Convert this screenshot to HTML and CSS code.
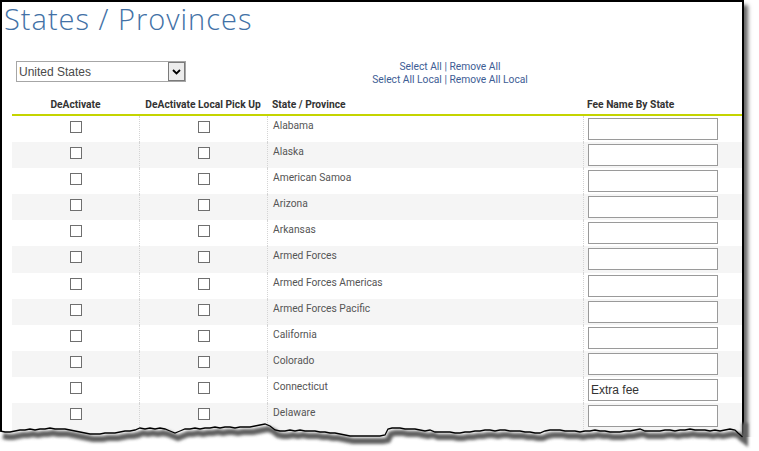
FILE: index.html
```html
<!DOCTYPE html>
<html>
<head>
<meta charset="utf-8">
<link rel="stylesheet" href="styles.css">
</head>
<body>
<div class="page">
  <div class="shot">
    <h1 class="title">States / Provinces</h1>
    <div class="controls">
      <div class="select-box">
        <select class="country"><option>United States</option></select>
        <span class="arrow"><svg width="9" height="6" viewBox="0 0 9 6"><path d="M1 1 L4.5 4.5 L8 1" fill="none" stroke="#000" stroke-width="1.8"/></svg></span>
      </div>
      <div class="links">
        <div><a href="#">Select All</a> | <a href="#">Remove All</a></div>
        <div><a href="#">Select All Local</a> | <a href="#">Remove All Local</a></div>
      </div>
    </div>
    <div class="table">
      <div class="row head">
        <div class="c c1">DeActivate</div>
        <div class="c c2">DeActivate Local Pick Up</div>
        <div class="c c3">State / Province</div>
        <div class="c c4">Fee Name By State</div>
      </div>
      <div class="row"><div class="c c1"><input type="checkbox" class="cb"></div><div class="c c2"><input type="checkbox" class="cb"></div><div class="c c3">Alabama</div><div class="c c4"><input class="fee" type="text"></div></div>
      <div class="row"><div class="c c1"><input type="checkbox" class="cb"></div><div class="c c2"><input type="checkbox" class="cb"></div><div class="c c3">Alaska</div><div class="c c4"><input class="fee" type="text"></div></div>
      <div class="row"><div class="c c1"><input type="checkbox" class="cb"></div><div class="c c2"><input type="checkbox" class="cb"></div><div class="c c3">American Samoa</div><div class="c c4"><input class="fee" type="text"></div></div>
      <div class="row"><div class="c c1"><input type="checkbox" class="cb"></div><div class="c c2"><input type="checkbox" class="cb"></div><div class="c c3">Arizona</div><div class="c c4"><input class="fee" type="text"></div></div>
      <div class="row"><div class="c c1"><input type="checkbox" class="cb"></div><div class="c c2"><input type="checkbox" class="cb"></div><div class="c c3">Arkansas</div><div class="c c4"><input class="fee" type="text"></div></div>
      <div class="row"><div class="c c1"><input type="checkbox" class="cb"></div><div class="c c2"><input type="checkbox" class="cb"></div><div class="c c3">Armed Forces</div><div class="c c4"><input class="fee" type="text"></div></div>
      <div class="row"><div class="c c1"><input type="checkbox" class="cb"></div><div class="c c2"><input type="checkbox" class="cb"></div><div class="c c3">Armed Forces Americas</div><div class="c c4"><input class="fee" type="text"></div></div>
      <div class="row"><div class="c c1"><input type="checkbox" class="cb"></div><div class="c c2"><input type="checkbox" class="cb"></div><div class="c c3">Armed Forces Pacific</div><div class="c c4"><input class="fee" type="text"></div></div>
      <div class="row"><div class="c c1"><input type="checkbox" class="cb"></div><div class="c c2"><input type="checkbox" class="cb"></div><div class="c c3">California</div><div class="c c4"><input class="fee" type="text"></div></div>
      <div class="row"><div class="c c1"><input type="checkbox" class="cb"></div><div class="c c2"><input type="checkbox" class="cb"></div><div class="c c3">Colorado</div><div class="c c4"><input class="fee" type="text"></div></div>
      <div class="row"><div class="c c1"><input type="checkbox" class="cb"></div><div class="c c2"><input type="checkbox" class="cb"></div><div class="c c3">Connecticut</div><div class="c c4"><input class="fee" type="text" value="Extra fee"></div></div>
      <div class="row last"><div class="c c1"><input type="checkbox" class="cb"></div><div class="c c2"><input type="checkbox" class="cb"></div><div class="c c3">Delaware</div><div class="c c4"><input class="fee" type="text"></div></div>
    </div>
  </div>
  <svg class="tear" width="759" height="36" viewBox="0 415 759 36">
    <defs><filter id="bl" x="-5%" y="-100%" width="110%" height="300%"><feGaussianBlur stdDeviation="1.6"/></filter></defs>
    <path fill="#fff" d="M0 431 L5 432 L10 432 L15 431 L20 430 L25 430 L30 429 L35 430 L40 429 L45 429 L50 428 L55 429 L60 429 L65 429 L70 430 L75 431 L80 432 L85 433 L90 434 L95 434 L100 434 L105 433 L110 433 L115 433 L120 432 L125 431 L130 431 L135 430 L140 428 L145 429 L150 428 L155 429 L160 428 L165 429 L170 431 L175 433 L180 431 L185 429 L190 429 L195 428 L200 429 L205 428 L210 428 L215 427 L220 428 L225 427 L230 427 L235 428 L240 427 L245 427 L250 427 L255 426 L260 425 L265 424 L270 426 L275 430 L280 431 L285 431 L290 430 L295 431 L300 430 L305 431 L310 431 L315 431 L320 432 L325 432 L330 433 L335 433 L340 434 L345 435 L350 436 L355 436 L360 436 L365 436 L370 436 L375 436 L380 436 L385 435 L388 429 L392 428 L396 428 L400 428 L405 429 L410 429 L415 429 L420 430 L425 431 L430 430 L435 432 L440 432 L445 432 L450 432 L455 433 L460 433 L465 432 L470 432 L475 431 L480 431 L485 430 L490 430 L495 431 L500 430 L505 430 L510 431 L515 431 L520 431 L525 432 L530 432 L535 433 L540 433 L545 431 L550 430 L555 430 L560 430 L565 431 L570 431 L575 431 L580 432 L585 431 L590 431 L595 430 L600 431 L605 431 L610 432 L615 432 L620 432 L625 431 L630 431 L635 430 L640 429 L645 431 L650 431 L655 431 L660 431 L665 430 L670 430 L675 431 L680 430 L685 430 L690 429 L695 430 L700 430 L705 430 L710 431 L715 430 L720 431 L725 430 L730 429 L735 430 L738 433 L742 436 L744 437 L759 437 L759 451 L0 451 Z"/>
    <path filter="url(#bl)" fill="none" stroke="#5e5e5e" stroke-width="6" transform="translate(3 5)" d="M0 431 L5 432 L10 432 L15 431 L20 430 L25 430 L30 429 L35 430 L40 429 L45 429 L50 428 L55 429 L60 429 L65 429 L70 430 L75 431 L80 432 L85 433 L90 434 L95 434 L100 434 L105 433 L110 433 L115 433 L120 432 L125 431 L130 431 L135 430 L140 428 L145 429 L150 428 L155 429 L160 428 L165 429 L170 431 L175 433 L180 431 L185 429 L190 429 L195 428 L200 429 L205 428 L210 428 L215 427 L220 428 L225 427 L230 427 L235 428 L240 427 L245 427 L250 427 L255 426 L260 425 L265 424 L270 426 L275 430 L280 431 L285 431 L290 430 L295 431 L300 430 L305 431 L310 431 L315 431 L320 432 L325 432 L330 433 L335 433 L340 434 L345 435 L350 436 L355 436 L360 436 L365 436 L370 436 L375 436 L380 436 L385 435 L388 429 L392 428 L396 428 L400 428 L405 429 L410 429 L415 429 L420 430 L425 431 L430 430 L435 432 L440 432 L445 432 L450 432 L455 433 L460 433 L465 432 L470 432 L475 431 L480 431 L485 430 L490 430 L495 431 L500 430 L505 430 L510 431 L515 431 L520 431 L525 432 L530 432 L535 433 L540 433 L545 431 L550 430 L555 430 L560 430 L565 431 L570 431 L575 431 L580 432 L585 431 L590 431 L595 430 L600 431 L605 431 L610 432 L615 432 L620 432 L625 431 L630 431 L635 430 L640 429 L645 431 L650 431 L655 431 L660 431 L665 430 L670 430 L675 431 L680 430 L685 430 L690 429 L695 430 L700 430 L705 430 L710 431 L715 430 L720 431 L725 430 L730 429 L735 430 L738 433 L742 436 L742 418"/>
    <path fill="none" stroke="#000" stroke-width="1.3" d="M0 431 L5 432 L10 432 L15 431 L20 430 L25 430 L30 429 L35 430 L40 429 L45 429 L50 428 L55 429 L60 429 L65 429 L70 430 L75 431 L80 432 L85 433 L90 434 L95 434 L100 434 L105 433 L110 433 L115 433 L120 432 L125 431 L130 431 L135 430 L140 428 L145 429 L150 428 L155 429 L160 428 L165 429 L170 431 L175 433 L180 431 L185 429 L190 429 L195 428 L200 429 L205 428 L210 428 L215 427 L220 428 L225 427 L230 427 L235 428 L240 427 L245 427 L250 427 L255 426 L260 425 L265 424 L270 426 L275 430 L280 431 L285 431 L290 430 L295 431 L300 430 L305 431 L310 431 L315 431 L320 432 L325 432 L330 433 L335 433 L340 434 L345 435 L350 436 L355 436 L360 436 L365 436 L370 436 L375 436 L380 436 L385 435 L388 429 L392 428 L396 428 L400 428 L405 429 L410 429 L415 429 L420 430 L425 431 L430 430 L435 432 L440 432 L445 432 L450 432 L455 433 L460 433 L465 432 L470 432 L475 431 L480 431 L485 430 L490 430 L495 431 L500 430 L505 430 L510 431 L515 431 L520 431 L525 432 L530 432 L535 433 L540 433 L545 431 L550 430 L555 430 L560 430 L565 431 L570 431 L575 431 L580 432 L585 431 L590 431 L595 430 L600 431 L605 431 L610 432 L615 432 L620 432 L625 431 L630 431 L635 430 L640 429 L645 431 L650 431 L655 431 L660 431 L665 430 L670 430 L675 431 L680 430 L685 430 L690 429 L695 430 L700 430 L705 430 L710 431 L715 430 L720 431 L725 430 L730 429 L735 430 L738 433 L742.5 437"/>
  </svg>
</div>
</body>
</html>
```
FILE: styles.css
```css
html, body {
  margin: 0;
  padding: 0;
  background: #fff;
}
.page {
  position: relative;
  width: 759px;
  height: 451px;
  overflow: hidden;
}
.shot {
  width: 744px;
  height: 460px;
  box-sizing: border-box;
  border: 2px solid #000;
  border-bottom: none;
  background: #fff;
  box-shadow: 4px 5px 4px rgba(0, 0, 0, 0.6);
  font-family: Roboto, "Liberation Sans", Arial, sans-serif;
  overflow: hidden;
}
.title {
  margin: 0;
  padding-left: 2px;
  font-family: "Open Sans", Lato, sans-serif;
  font-weight: 300;
  font-size: 29px;
  line-height: 34px;
  color: #4271a6;
  letter-spacing: 1px;
}
.controls {
  display: flex;
  margin-top: 25px;
  padding-left: 14px;
  height: 26px;
}
.select-box {
  display: flex;
  width: 170px;
  height: 21px;
  box-sizing: border-box;
  border: 1px solid #a6a6a6;
  background: #fff;
}
.country {
  appearance: none;
  -webkit-appearance: none;
  flex: 1;
  min-width: 0;
  border: none;
  outline: none;
  background: transparent;
  font-family: "Liberation Sans", Arial, sans-serif;
  font-size: 12px;
  color: #4a4a4a;
  padding: 0 0 0 2px;
  margin: 0;
  height: 19px;
}
.arrow {
  display: flex;
  align-items: center;
  justify-content: center;
  width: 17px;
  height: 19px;
  box-sizing: border-box;
  border: 1px solid #7a7a7a;
  background: #ececec;
}
.links {
  width: 528px;
  text-align: center;
  font-size: 10.25px;
  line-height: 13px;
  color: #3e5d95;
  margin-top: -1px;
}
.links a {
  color: #3e5d95;
  text-decoration: none;
}
.table {
  margin-left: 10px;
  margin-top: 8px;
}
.row {
  display: grid;
  grid-template-columns: 127px 128px 316px 159px;
  height: 26.1px;
  font-size: 10.25px;
  color: #555;
}
.row:nth-child(odd) {
  background: #f5f5f5;
}
.row.last {
  height: 40px;
}
.row.head {
  height: 21px;
  box-sizing: border-box;
  padding-top: 3px;
  border-bottom: 2px solid #c4d400;
  background: #fff;
  font-weight: bold;
  color: #333;
}
.row.head .c {
  border-left: none;
  padding-top: 0;
}
.c {
  box-sizing: border-box;
  padding-top: 3px;
  line-height: 14px;
}
.c2, .c3, .c4 {
  border-left: 1px dotted #d4d4d4;
}
.c1, .c2 {
  text-align: center;
}
.c3 {
  padding-left: 5px;
}
.c4 {
  padding-left: 4px;
  padding-top: 2px;
}
.row:not(.head) .c1, .row:not(.head) .c2 {
  padding-top: 5px;
}
.cb {
  appearance: none;
  -webkit-appearance: none;
  display: block;
  margin: 0 auto;
  width: 12px;
  height: 12px;
  box-sizing: border-box;
  border: 1px solid #6f6f6f;
  background: #fff;
  border-radius: 0;
}
.fee {
  display: block;
  width: 130px;
  height: 22px;
  box-sizing: border-box;
  border: 1px solid #9a9a9a;
  background: #fff;
  margin: 0;
  padding: 0 2px;
  font-family: "Liberation Sans", Arial, sans-serif;
  font-size: 12px;
  color: #333;
  outline: none;
}
.tear {
  position: absolute;
  left: 0;
  top: 415px;
}
```
